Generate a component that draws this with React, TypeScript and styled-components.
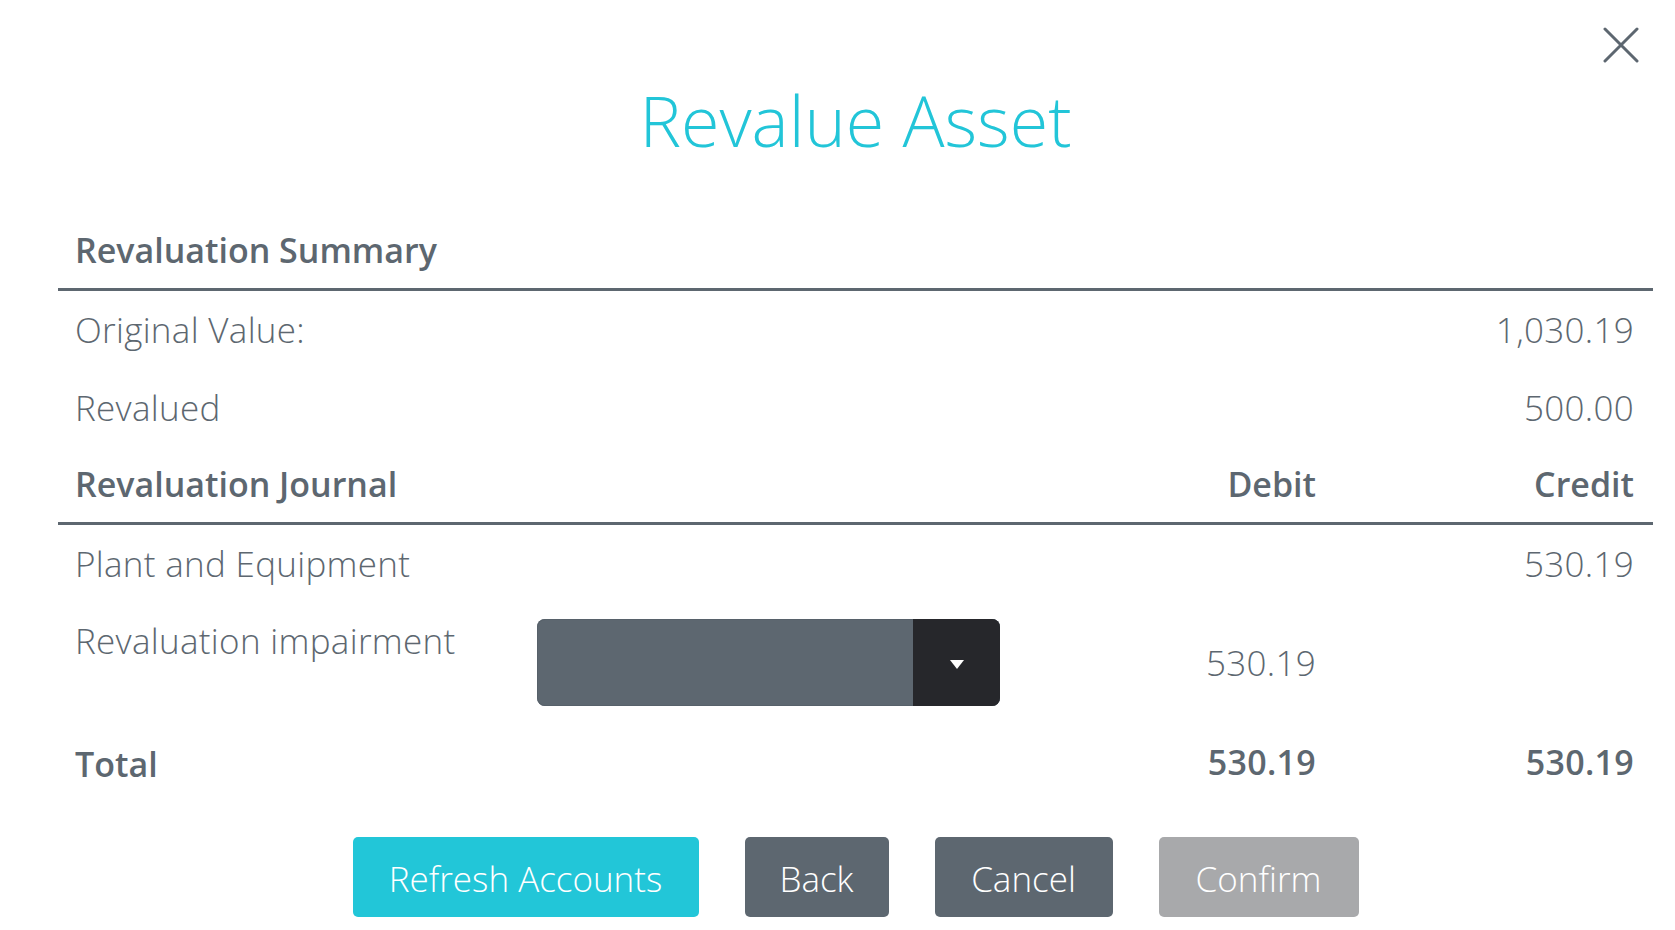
import React from "react";
import styled, { createGlobalStyle } from "styled-components";

const GlobalStyle = createGlobalStyle`
  html, body {
    margin: 0;
    padding: 0;
    background: #ffffff;
  }
  body {
    font-family: "Open Sans", "Liberation Sans", sans-serif;
    color: #5d6770;
  }
  * { box-sizing: border-box; }
`;

const Modal = styled.div`
  position: relative;
  width: 1675px;
  height: 930px;
  padding: 0 22px 0 58px;
  background: #ffffff;
`;

const CloseButton = styled.button`
  position: absolute;
  top: 27px;
  right: 36px;
  width: 36px;
  height: 36px;
  padding: 0;
  border: none;
  background: transparent;
  display: flex;
  align-items: center;
  justify-content: center;
  cursor: pointer;
`;

const Title = styled.h1`
  margin: 0;
  padding-top: 75px;
  height: 166px;
  text-align: center;
  font-size: 70px;
  line-height: 90px;
  font-weight: 300;
  color: #22c5d8;
`;

const SectionHeader = styled.div<{ $gap: number }>`
  margin-top: ${(p) => p.$gap}px;
  display: grid;
  grid-template-columns: 462px 463px 1fr 318px;
  align-items: center;
  height: 66px;
  padding: 0 19px 13px 17px;
  border-bottom: 3px solid #5d6770;
  font-size: 34px;
  line-height: 50px;
  font-weight: 600;
`;

const HeaderLabel = styled.div<{ $span?: number }>`
  grid-column: span ${(p) => p.$span ?? 1};
  white-space: nowrap;
`;

const HeaderNum = styled.div`
  text-align: right;
`;

const Row = styled.div<{ $h: number }>`
  display: grid;
  grid-template-columns: 462px 463px 1fr 318px;
  align-items: center;
  height: ${(p) => p.$h}px;
  padding: 0 19px 0 17px;
  font-size: 35px;
  font-weight: 300;
  letter-spacing: 0.3px;
  line-height: 44px;
`;

const Label = styled.div<{ $top?: boolean; $bold?: boolean }>`
  align-self: ${(p) => (p.$top ? "start" : "center")};
  margin-top: ${(p) => (p.$top ? "16px" : "0")};
  font-weight: ${(p) => (p.$bold ? 600 : 300)};
  font-size: ${(p) => (p.$bold ? "34px" : "inherit")};
  letter-spacing: ${(p) => (p.$bold ? "0" : "inherit")};
  white-space: nowrap;
  ${(p) => (p.$bold ? "transform: translateY(2px);" : "")}
`;

const Num = styled.div<{ $col: number; $bold?: boolean }>`
  grid-column: ${(p) => p.$col};
  text-align: right;
  font-weight: ${(p) => (p.$bold ? 600 : 300)};
  font-size: ${(p) => (p.$bold ? "34px" : "inherit")};
  white-space: nowrap;
`;

const Select = styled.div`
  display: flex;
  width: 463px;
  height: 87px;
  border-radius: 8px;
  background: #5d6770;
  overflow: hidden;
  box-shadow: inset 0 0 0 1px #57616a;
`;

const SelectValue = styled.div`
  flex: 1;
`;

const SelectToggle = styled.div`
  width: 87px;
  height: 100%;
  background: #26272b;
  display: flex;
  align-items: center;
  justify-content: center;
`;

const Caret = styled.span`
  width: 0;
  height: 0;
  border-left: 7px solid transparent;
  border-right: 7px solid transparent;
  border-top: 9px solid #ffffff;
  margin-top: 4px;
`;

const ButtonBar = styled.div`
  margin-top: 35px;
  display: flex;
  justify-content: center;
  gap: 46px;
`;

const Button = styled.button<{ $bg: string; $w: number }>`
  width: ${(p) => p.$w}px;
  height: 80px;
  border: none;
  border-radius: 5px;
  background: ${(p) => p.$bg};
  color: #ffffff;
  font-family: "Open Sans", "Liberation Sans", sans-serif;
  font-size: 35px;
  font-weight: 300;
  padding: 2px 0 0;
  cursor: pointer;
`;

export default function App() {
  return (
    <>
      <GlobalStyle />
      <Modal>
        <CloseButton aria-label="Close">
          <svg width="36" height="36" viewBox="0 0 36 36">
            <path d="M2 2 L34 34 M34 2 L2 34" stroke="#5d6770" strokeWidth="3" strokeLinecap="round" />
          </svg>
        </CloseButton>
        <Title>Revalue Asset</Title>

        <SectionHeader $gap={59}>
          <HeaderLabel $span={4}>Revaluation Summary</HeaderLabel>
        </SectionHeader>
        <Row $h={78}>
          <Label>Original Value:</Label>
          <Num $col={4}>1,030.19</Num>
        </Row>
        <Row $h={78}>
          <Label>Revalued</Label>
          <Num $col={4}>500.00</Num>
        </Row>

        <SectionHeader $gap={12}>
          <HeaderLabel $span={2}>Revaluation Journal</HeaderLabel>
          <HeaderNum>Debit</HeaderNum>
          <HeaderNum>Credit</HeaderNum>
        </SectionHeader>
        <Row $h={78}>
          <Label>Plant and Equipment</Label>
          <Num $col={4}>530.19</Num>
        </Row>
        <Row $h={119}>
          <Label $top>Revaluation impairment</Label>
          <Select>
            <SelectValue />
            <SelectToggle>
              <Caret />
            </SelectToggle>
          </Select>
          <Num $col={3}>530.19</Num>
        </Row>
        <Row $h={80}>
          <Label $bold>Total</Label>
          <Num $col={3} $bold>530.19</Num>
          <Num $col={4} $bold>530.19</Num>
        </Row>

        <ButtonBar>
          <Button $bg="#22c6d8" $w={346}>Refresh Accounts</Button>
          <Button $bg="#5d6770" $w={144}>Back</Button>
          <Button $bg="#5d6770" $w={178}>Cancel</Button>
          <Button $bg="#a8a9ab" $w={200}>Confirm</Button>
        </ButtonBar>
      </Modal>
    </>
  );
}
